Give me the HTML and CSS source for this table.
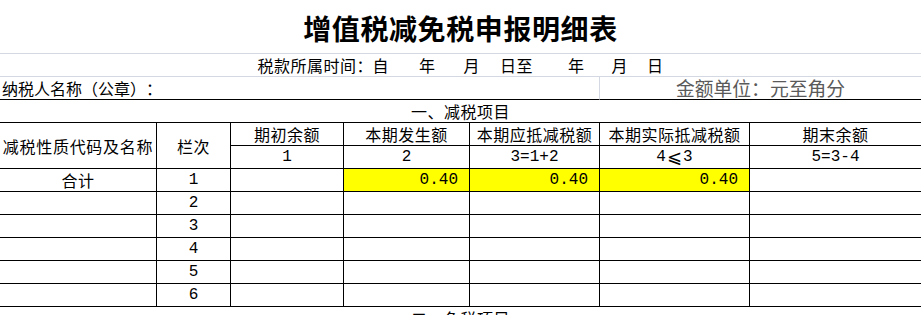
FILE: index.html
```html
<!DOCTYPE html>
<html lang="zh-CN">
<head>
<meta charset="utf-8">
<title>增值税减免税申报明细表</title>
<link rel="stylesheet" href="styles.css">
</head>
<body>
<div class="sheet">
  <div class="c title span7">增值税减免税申报明细表</div>
  <div class="c period span7"><span>税款所属时间<span class="fw">：</span>自</span><span class="g30">年</span><span class="g28">月</span><span class="g20">日至</span><span class="g35">年</span><span class="g27">月</span><span class="g19">日</span></div>
  <div class="c taxpayer span5"><span>纳税人名称<span class="fw">（</span>公章<span class="fw">）</span><span class="fw">：</span></span></div>
  <div class="c unit span2"><span>金额单位<span class="fw">：</span>元至角分</span></div>
  <div class="c section span7">一、减税项目</div>

  <div class="c cell hd r2 wide">减税性质代码及名称</div>
  <div class="c cell hd r2">栏次</div>
  <div class="c cell hd">期初余额</div>
  <div class="c cell hd">本期发生额</div>
  <div class="c cell hd">本期应抵减税额</div>
  <div class="c cell hd">本期实际抵减税额</div>
  <div class="c cell hd last">期末余额</div>
  <div class="c cell num">1</div>
  <div class="c cell num">2</div>
  <div class="c cell num">3=1+2</div>
  <div class="c cell num">4<span class="le">⩽</span>3</div>
  <div class="c cell num last">5=3-4</div>

  <div class="c cell hd">合计</div>
  <div class="c cell num">1</div>
  <div class="c cell"></div>
  <div class="c cell amt hl">0.40</div>
  <div class="c cell amt hl">0.40</div>
  <div class="c cell amt hl">0.40</div>
  <div class="c cell last"></div>

  <div class="c cell"></div><div class="c cell num">2</div><div class="c cell"></div><div class="c cell"></div><div class="c cell"></div><div class="c cell"></div><div class="c cell last"></div>
  <div class="c cell"></div><div class="c cell num">3</div><div class="c cell"></div><div class="c cell"></div><div class="c cell"></div><div class="c cell"></div><div class="c cell last"></div>
  <div class="c cell"></div><div class="c cell num">4</div><div class="c cell"></div><div class="c cell"></div><div class="c cell"></div><div class="c cell"></div><div class="c cell last"></div>
  <div class="c cell"></div><div class="c cell num">5</div><div class="c cell"></div><div class="c cell"></div><div class="c cell"></div><div class="c cell"></div><div class="c cell last"></div>
  <div class="c cell"></div><div class="c cell num">6</div><div class="c cell"></div><div class="c cell"></div><div class="c cell"></div><div class="c cell"></div><div class="c cell last"></div>

  <div class="c section span7">二、免税项目</div>
</div>
</body>
</html>
```

FILE: styles.css
```css
html, body {
  margin: 0;
  padding: 0;
  background: #ffffff;
  overflow: hidden;
}
body {
  width: 921px;
  height: 315px;
  font-family: "Noto Sans CJK SC", "Noto Sans", sans-serif;
  color: #000;
  text-spacing-trim: space-all;
}
.sheet {
  display: grid;
  grid-template-columns: 157px 74px 113px 126px 130px 150px 171px;
  grid-template-rows: 54px;
  grid-auto-rows: 23px;
  width: 921px;
}
.c {
  box-sizing: border-box;
  display: flex;
  align-items: center;
  justify-content: center;
  font-size: 16px;
  line-height: 1;
  letter-spacing: 0.5px;
  white-space: nowrap;
  text-spacing-trim: space-all;
}
.fw {
  display: inline-block;
  width: 1em;
  text-align: center;
  letter-spacing: 0;
}
.span7 { grid-column: span 7; }
.span5 { grid-column: span 5; }
.span2 { grid-column: span 2; }
.r2 { grid-row: span 2; }

.title {
  font-size: 28px;
  font-weight: 700;
  letter-spacing: 0.6px;
  border-bottom: 1px solid #d4d8e2;
  padding-top: 2px;
}
.period {
  border-bottom: 1px solid #d4d8e2;
}
.g30 { margin-left: 30px; }
.g28 { margin-left: 28px; }
.g20 { margin-left: 20px; }
.g35 { margin-left: 35px; }
.g27 { margin-left: 27px; }
.g19 { margin-left: 19px; }

.taxpayer {
  justify-content: flex-start;
  padding-left: 2px;
  letter-spacing: 0;
  border-bottom: 1px solid #000;
  border-right: 1px solid #d4d8e2;
}
.unit {
  font-size: 18.8px;
  letter-spacing: 0;
  color: #5a5a5a;
  border-bottom: 1px solid #000;
}
.section {
  border-bottom: 1px solid #000;
}
.cell {
  border-right: 1px solid #000;
  border-bottom: 1px solid #000;
}
.cell.last {
  border-right: none;
}
.wide {
  letter-spacing: 0.7px;
}
.num {
  font-family: "Liberation Mono", "DejaVu Sans", "Noto Sans CJK SC", monospace;
  font-size: 16px;
  letter-spacing: 0;
}
.le {
  font-family: "DejaVu Sans", "Noto Sans CJK SC", sans-serif;
  font-size: 18px;
  padding: 0 1px;
}
.amt {
  justify-content: flex-end;
  padding-right: 11px;
  font-family: "Liberation Mono", monospace;
  font-size: 16px;
  letter-spacing: 0;
}
.hl {
  background: #ffff00;
}
```
